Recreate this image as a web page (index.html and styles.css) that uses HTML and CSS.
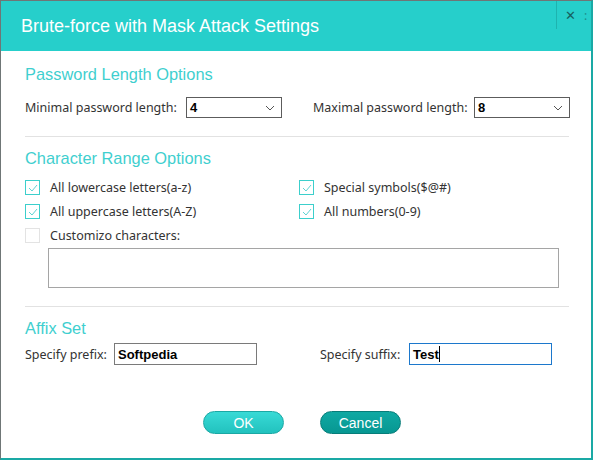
FILE: index.html
```html
<!DOCTYPE html>
<html>
<head>
<meta charset="utf-8">
<link rel="stylesheet" href="styles.css">
</head>
<body>
<div class="window">
  <div class="header">
    <div class="title">Brute-force with Mask Attack Settings</div>
    <div class="controls">
      <span class="close">✕</span>
      <span class="extra">:</span>
    </div>
  </div>
  <div class="content">
    <div class="section first">
      <div class="heading">Password Length Options</div>
      <div class="row two">
        <div class="field">
          <span class="label">Minimal password length:</span>
          <div class="select"><span class="val">4</span>
            <svg class="chev" width="10" height="6" viewBox="0 0 10 6"><path d="M1 1 L5 5 L9 1" fill="none" stroke="#555" stroke-width="1"/></svg>
          </div>
        </div>
        <div class="field right">
          <span class="label">Maximal password length:</span>
          <div class="select"><span class="val">8</span>
            <svg class="chev" width="10" height="6" viewBox="0 0 10 6"><path d="M1 1 L5 5 L9 1" fill="none" stroke="#555" stroke-width="1"/></svg>
          </div>
        </div>
      </div>
    </div>
    <div class="divider d1"></div>
    <div class="section">
      <div class="heading">Character Range Options</div>
      <div class="checks">
        <div class="check"><span class="box on"><svg width="10" height="8" viewBox="0 0 10 8"><path d="M1 4 L4 7 L9 1" fill="none" stroke="#5fd3d3" stroke-width="1"/></svg></span><span class="clabel">All lowercase letters(a-z)</span></div>
        <div class="check"><span class="box on"><svg width="10" height="8" viewBox="0 0 10 8"><path d="M1 4 L4 7 L9 1" fill="none" stroke="#5fd3d3" stroke-width="1"/></svg></span><span class="clabel">Special symbols($@#)</span></div>
        <div class="check"><span class="box on"><svg width="10" height="8" viewBox="0 0 10 8"><path d="M1 4 L4 7 L9 1" fill="none" stroke="#5fd3d3" stroke-width="1"/></svg></span><span class="clabel">All uppercase letters(A-Z)</span></div>
        <div class="check"><span class="box on"><svg width="10" height="8" viewBox="0 0 10 8"><path d="M1 4 L4 7 L9 1" fill="none" stroke="#5fd3d3" stroke-width="1"/></svg></span><span class="clabel">All numbers(0-9)</span></div>
        <div class="check"><span class="box off"></span><span class="clabel">Customizo characters:</span></div>
      </div>
      <div class="textarea"></div>
    </div>
    <div class="divider d2"></div>
    <div class="section">
      <div class="heading">Affix Set</div>
      <div class="row affix">
        <div class="field">
          <span class="label">Specify prefix:</span>
          <div class="input">Softpedia</div>
        </div>
        <div class="field right2">
          <span class="label">Specify suffix:</span>
          <div class="input focus">Test<span class="caret"></span></div>
        </div>
      </div>
    </div>
    <div class="buttons">
      <div class="btn ok">OK</div>
      <div class="btn cancel">Cancel</div>
    </div>
  </div>
</div>
</body>
</html>
```
FILE: styles.css
```css
* { box-sizing: border-box; }
body { margin: 0; background: #fff; font-family: "Noto Sans", "Open Sans", sans-serif; }
.window {
  width: 593px; height: 460px;
  border-left: 1px solid #6f7676;
  border-top: 1px solid #6f7676;
  border-right: 2px solid #1aa9a5;
  border-bottom: 2px solid #1aa9a5;
  background: #fff;
  display: flex; flex-direction: column;
}
.header {
  height: 50px; background: #26cfcb;
  display: flex; justify-content: space-between; align-items: flex-start;
}
.title {
  font-family: "Liberation Sans", Arial, sans-serif;
  color: #fff; font-size: 18px; padding: 15px 0 0 20px;
}
.controls {
  display: flex; align-items: center; height: 28px;
  border-left: 1px solid #1eb3af; padding-left: 8px; margin-right: 1px;
}
.close { color: #17615f; font-size: 13px; font-weight: bold; font-family: "DejaVu Sans", sans-serif; width: 14px; }
.extra { color: #17615f; font-size: 12px; margin-left: 5px; opacity: .6; width: 6px; }
.content { padding: 0 22px 0 24px; flex: 1; display: flex; flex-direction: column; }
.heading {
  font-family: "Liberation Sans", Arial, sans-serif;
  color: #3fcfcf; font-size: 16.4px; line-height: 18px;
}
.section.first { margin-top: 14px; }
.row { display: flex; }
.row.two { margin-top: 14px; }
.field { display: flex; align-items: center; }
.label { font-size: 12.5px; color: #333; }
.row.two .field .label { width: 161px; }
.row.two .field.right { margin-left: 31px; }
.select {
  width: 96px; height: 21px; border: 1px solid #5c5c5c;
  display: flex; align-items: center; justify-content: space-between;
  padding: 0 6px 0 3px;
}
.val { font-family: "Liberation Sans", Arial, sans-serif; font-weight: bold; font-size: 13px; color: #000; }
.divider { height: 1px; background: #e2e2e2; margin-right: 0; }
.d1 { margin-top: 18px; }
.divider + .section { margin-top: 12px; }
.checks {
  display: grid; grid-template-columns: 274px 1fr;
  row-gap: 9px; margin-top: 13px;
}
.check { display: flex; align-items: center; height: 15px; }
.box { width: 15px; height: 15px; display: flex; align-items: center; justify-content: center; margin-right: 10px; }
.box.on { border: 1px solid #3ccfcc; }
.box.off { border: 1px solid #e3e3e3; }
.clabel { font-size: 12.5px; color: #333; }
.textarea {
  margin: 5px 0 0 23px; width: 511px; height: 40px;
  border: 1px solid #a5a5a5;
}
.d2 { margin-top: 18px; }
.row.affix { margin-top: 6px; }
.affix .label { width: 89px; }
.field.right2 { margin-left: 63px; }
.input {
  width: 143px; height: 22px; border: 1px solid #7a7a7a;
  font-family: "Liberation Sans", Arial, sans-serif; font-weight: bold; font-size: 13px;
  color: #000; padding: 3px 0 0 3px; display: flex; align-items: flex-start;
}
.input.focus { border-color: #1c78cc; }
.caret { display: inline-block; width: 1px; height: 16px; background: #000; margin-top: -1px; }
.buttons { display: flex; justify-content: center; gap: 36px; margin-top: 46px; padding-left: 10px; }
.btn {
  width: 81px; height: 23px; border-radius: 12px;
  font-family: "Liberation Sans", Arial, sans-serif; font-size: 14px; color: #fff;
  display: flex; align-items: center; justify-content: center;
}
.btn.ok { background: linear-gradient(#38dad6, #22c2be); border: 1px solid #1ba8a4; }
.btn.cancel { background: linear-gradient(#0fa9a3, #079792); border: 1px solid #077d79; }
```
